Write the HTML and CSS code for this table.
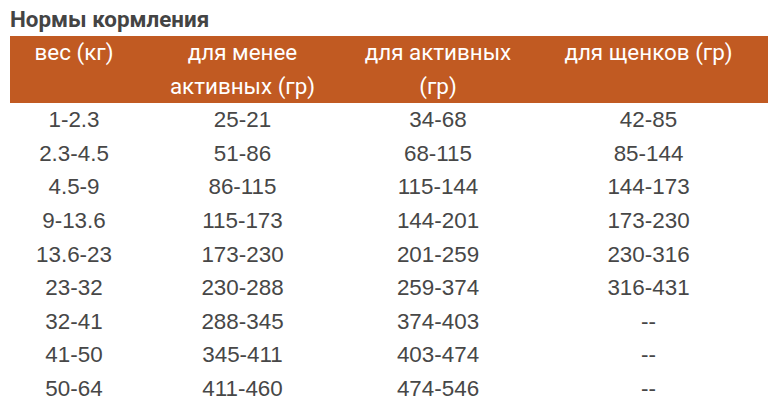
FILE: index.html
```html
<!DOCTYPE html>
<html lang="ru">
<head>
<meta charset="utf-8">
<title>Нормы кормления</title>
<link rel="stylesheet" href="styles.css">
</head>
<body>
<div class="page">
  <h2 class="title">Нормы кормления</h2>
  <table class="feed">
    <colgroup>
      <col class="c1"><col class="c2"><col class="c3"><col class="c4">
    </colgroup>
    <thead>
      <tr><th>вес (кг)</th><th>для менее активных (гр)</th><th>для активных (гр)</th><th>для щенков (гр)</th></tr>
    </thead>
    <tbody>
      <tr><td>1-2.3</td><td>25-21</td><td>34-68</td><td>42-85</td></tr>
      <tr><td>2.3-4.5</td><td>51-86</td><td>68-115</td><td>85-144</td></tr>
      <tr><td>4.5-9</td><td>86-115</td><td>115-144</td><td>144-173</td></tr>
      <tr><td>9-13.6</td><td>115-173</td><td>144-201</td><td>173-230</td></tr>
      <tr><td>13.6-23</td><td>173-230</td><td>201-259</td><td>230-316</td></tr>
      <tr><td>23-32</td><td>230-288</td><td>259-374</td><td>316-431</td></tr>
      <tr><td>32-41</td><td>288-345</td><td>374-403</td><td>--</td></tr>
      <tr><td>41-50</td><td>345-411</td><td>403-474</td><td>--</td></tr>
      <tr><td>50-64</td><td>411-460</td><td>474-546</td><td>--</td></tr>
    </tbody>
  </table>
</div>
</body>
</html>
```

FILE: styles.css
```css
html, body {
  margin: 0;
  padding: 0;
  background: #fff;
}
.page {
  padding: 6px 10px 0 10px;
  font-family: Roboto, "Liberation Sans", sans-serif;
  color: #464646;
}
.title {
  margin: 0 0 4px 0;
  font-size: 22.4px;
  line-height: 26px;
  font-weight: 700;
  color: #444;
}
.feed {
  width: 758px;
  border-collapse: collapse;
  table-layout: fixed;
  font-size: 22.4px;
  line-height: 33.6px;
}
.c1 { width: 128px; }
.c2 { width: 209px; }
.c3 { width: 182px; }
.c4 { width: 239px; }
.feed th,
.feed td {
  padding: 0 8px;
  text-align: center;
  vertical-align: top;
}
.feed th {
  background: #c15a22;
  color: #fff;
  font-weight: 400;
}
.feed td {
  font-family: "Liberation Sans", Arial, sans-serif;
  color: #474747;
}
```
